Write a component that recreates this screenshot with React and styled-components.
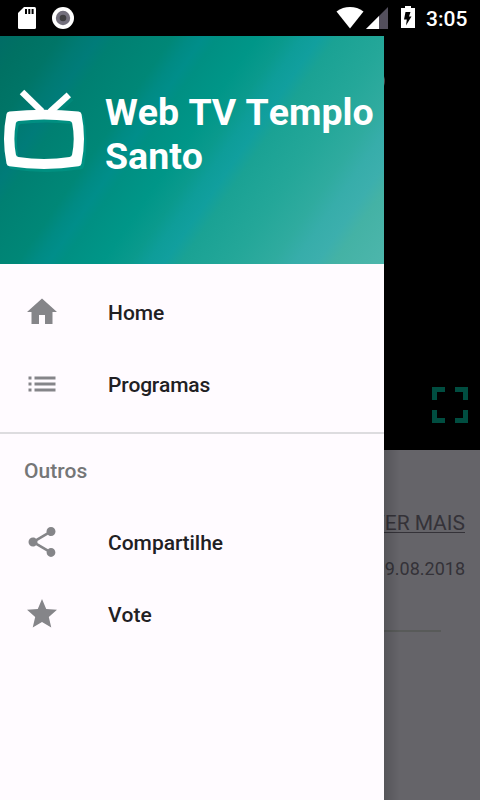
import React from 'react';
import styled, { createGlobalStyle } from 'styled-components';

const mainItems = [
  { label: 'Home', icon: 'M10 20v-6h4v6h5v-8h3L12 3 2 12h3v8z' },
  { label: 'Programas', spacing: '-0.2px', icon: 'M3 13h2v-2H3v2zm0 4h2v-2H3v2zm0-8h2V7H3v2zm4 4h14v-2H7v2zm0 4h14v-2H7v2zM7 7v2h14V7H7z' },
];

const otherItems = [
  { label: 'Compartilhe', icon: 'M18 16.08c-.76 0-1.44.3-1.96.77L8.91 12.7c.05-.23.09-.46.09-.7s-.04-.47-.09-.7l7.05-4.11c.54.5 1.25.81 2.04.81 1.66 0 3-1.34 3-3s-1.34-3-3-3-3 1.34-3 3c0 .24.04.47.09.7L8.04 9.81C7.5 9.31 6.79 9 6 9c-1.66 0-3 1.34-3 3s1.34 3 3 3c.79 0 1.5-.31 2.04-.81l7.12 4.16c-.05.21-.08.43-.08.65 0 1.61 1.31 2.92 2.92 2.92 1.61 0 2.92-1.31 2.92-2.92s-1.31-2.92-2.92-2.92z' },
  { label: 'Vote', icon: 'M12 17.27L18.18 21l-1.64-7.03L22 9.24l-7.19-.61L12 2 9.19 8.63 2 9.24l5.46 4.73L5.82 21z' },
];

const tvBody = 'M9.500 111.500Q44 108 78.500 111.500Q81 111.800 81.500 114Q86.500 138.500 81.500 163.500Q81 166 78.500 166.300Q44 171.500 9.500 166.300Q7 166 6.500 163.500Q1.500 138.500 6.500 114Q7 111.800 9.500 111.500zM18.500 121Q44 117.800 69.500 121Q71.700 121.300 72.100 123Q75.300 138.500 72.100 154.500Q71.700 156.600 69.500 157Q44 160.800 18.500 157Q16.300 156.600 15.900 154.500Q12.900 138.500 15.900 123Q16.300 121.300 18.500 121z';

const StatusIcons = () => (
  <StatusBar>
    <StatusSvg width="60" height="24" viewBox="18 6 60 24">
      <path fill="#fff" d="M24 7h10.500q1.500 0 1.500 1.500v19q0 1.500-1.500 1.500h-15q-1.500 0-1.500-1.500V13z" />
      <path fill="#000" d="M25 9h2v5h-2zM28.300 9h2v5h-2zM31.600 9h2v5h-2z" />
      <circle cx="63" cy="18" r="11" fill="#fff" />
      <circle cx="63" cy="18" r="7.200" fill="#73707d" />
      <circle cx="63" cy="18" r="3.300" fill="#3e3e40" />
    </StatusSvg>
    <RightStatus>
      <StatusSvg width="84" height="24" viewBox="336 6 84 24">
        <path fill="#fff" d="M350 28.600L336.500 11.500C344.500 5.600 355.500 5.600 363.500 11.500z" />
        <path fill="#534f5c" d="M388 7v22h-22z" />
        <path fill="#fff" d="M379 16v13h-13z" />
        <path fill="#fff" d="M405 6h6v2h4v20h-14V8h4z" />
        <path fill="#000" d="M405.500 12h5l-1.500 4.500h2.500l-5.500 9 .8-6h-2.800z" />
      </StatusSvg>
      <Clock>3:05</Clock>
    </RightStatus>
  </StatusBar>
);

const TvLogo = () => (
  <LogoSvg width="88" height="84" viewBox="0 88 88 84">
    <g transform="translate(2.500 3)" opacity="0.8">
      <path d={tvBody} fill="#009485" fillRule="evenodd" />
      <path d="M68.800 94.800L50 112" stroke="#009485" strokeWidth="6.500" opacity="0.5" />
    </g>
    <g stroke="#fff" strokeWidth="6.500" fill="none">
      <path d="M22 92L42 111.500" />
      <path d="M68.800 94.800L50 112" />
    </g>
    <path d={tvBody} fill="#fff" fillRule="evenodd" />
  </LogoSvg>
);

const MenuList = ({ items }) => (
  <List>
    {items.map(item => (
      <MenuItem key={item.label}>
        <MenuIcon viewBox="0 0 24 24"><path d={item.icon} /></MenuIcon>
        <MenuLabel $spacing={item.spacing}>{item.label}</MenuLabel>
      </MenuItem>
    ))}
  </List>
);

const App = () => (
  <Screen>
    <GlobalStyle />
    <StatusIcons />
    <Player>
      <PlayerBadge />
      <svg width="36" height="36" viewBox="0 0 36 36" fill="#004d40">
        <path d="M0 0h13v5H5v8H0zM23 0h13v13h-5V5h-8zM0 23h5v8h8v5H0zM31 23h5v13H23v-5h8z" />
      </svg>
    </Player>
    <Content>
      <MoreLink>VER MAIS</MoreLink>
      <DateText>19.08.2018</DateText>
      <ContentRule />
    </Content>
    <Drawer>
      <DrawerHeader>
        <TvLogo />
        <Title>Web TV Templo Santo</Title>
      </DrawerHeader>
      <MenuList items={mainItems} />
      <Divider />
      <Subheader>Outros</Subheader>
      <MenuList items={otherItems} />
    </Drawer>
    <DrawerShadow />
  </Screen>
);

export default App;

// ***********************************************************************************
// Styled Components
// ***********************************************************************************

const GlobalStyle = createGlobalStyle`
  * {
    box-sizing: border-box;
  }

  body {
    margin: 0;
    background: #000;
    font-family: Roboto, sans-serif;
    font-kerning: none;
  }
`;

const Screen = styled.div`
  position: relative;
  display: flex;
  flex-direction: column;
  width: 480px;
  height: 800px;
  overflow: hidden;
  background: #000;
`;

const StatusBar = styled.div`
  display: flex;
  justify-content: space-between;
  align-items: center;
  height: 36px;
  padding: 0 12px 0 18px;
`;

const StatusSvg = styled.svg`
  display: block;
`;

const RightStatus = styled.div`
  display: flex;
  align-items: center;
  gap: 6px;
`;

const Clock = styled.span`
  width: 42px;
  padding-top: 2px;
  color: #fff;
  font-size: 21px;
  font-weight: 500;
  line-height: 24px;
`;

const Player = styled.div`
  display: flex;
  justify-content: space-between;
  align-items: flex-end;
  height: 414px;
  padding: 0 12px 27px 361px;
`;

/* mostly hidden under the open drawer */
const PlayerBadge = styled.div`
  align-self: flex-start;
  width: 24px;
  height: 24px;
  margin-top: 33px;
  border-radius: 50%;
  background: #4a4a4a;
`;

const Content = styled.div`
  display: flex;
  flex: 1;
  flex-direction: column;
  align-items: flex-end;
  padding: 61px 15px 0 0;
  background: #656469;
  color: #343238;
`;

const MoreLink = styled.span`
  font-size: 21px;
  line-height: 25px;
  text-decoration: underline;
  text-decoration-thickness: 1px;
  text-underline-offset: 2px;
`;

const DateText = styled.span`
  margin-top: 22px;
  font-size: 18px;
  line-height: 21px;
`;

const ContentRule = styled.div`
  width: 402px;
  height: 2px;
  margin: 51px 24px 0 0;
  background: #585a59;
`;

const Drawer = styled.aside`
  position: absolute;
  top: 36px;
  left: 0;
  width: 384px;
  height: 764px;
  background: #fffbff;
`;

const DrawerShadow = styled.div`
  position: absolute;
  top: 450px;
  left: 384px;
  width: 16px;
  height: 350px;
  background: linear-gradient(90deg, rgba(0, 0, 0, 0.15), rgba(0, 0, 0, 0));
`;

/* the gradient starts behind the status bar, 36px above the visible header */
const DrawerHeader = styled.header`
  display: flex;
  align-items: flex-start;
  height: 228px;
  padding-top: 52px;
  background: linear-gradient(
    124.5deg,
    #00695c 0%,
    #006c66 4%,
    #007163 9%,
    #007567 15%,
    #007a73 19%,
    #007c79 22%,
    #008072 25%,
    #008777 35%,
    #008b84 38%,
    #008e8a 40.5%,
    #009083 43%,
    #009688 50%,
    #0a9a8d 55%,
    #0e9d99 58%,
    #119f9e 61%,
    #1aa294 64%,
    #24a799 73%,
    #2fab9f 80%,
    #37adaa 84%,
    #3cafad 88%,
    #44b2a5 91%,
    #4db6ac 100%
  ) 0 -36px / 384px 264px no-repeat;
`;

const LogoSvg = styled.svg`
  flex: none;
`;

const Title = styled.h1`
  margin: 2px 0 0 17px;
  color: #fff;
  font-size: 37.5px;
  font-weight: 700;
  line-height: 44px;
`;

const List = styled.nav`
  padding: 12px 0;
`;

const MenuItem = styled.div`
  display: flex;
  align-items: center;
  height: 72px;
  padding: 0 24px;
  gap: 48px;
`;

const MenuLabel = styled.span`
  padding-top: 2px;
  color: #212023;
  font-size: 21px;
  font-weight: 500;
  line-height: 25px;
  letter-spacing: ${props => props.$spacing || 'normal'};
`;

const MenuIcon = styled.svg`
  width: 36px;
  height: 36px;
  fill: #858589;
`;

const Divider = styled.div`
  height: 2px;
  background: #dddcdf;
`;

const Subheader = styled.div`
  height: 60px;
  padding: 25px 24px 0;
  color: #757677;
  font-size: 21px;
  font-weight: 500;
  line-height: 25px;
`;
